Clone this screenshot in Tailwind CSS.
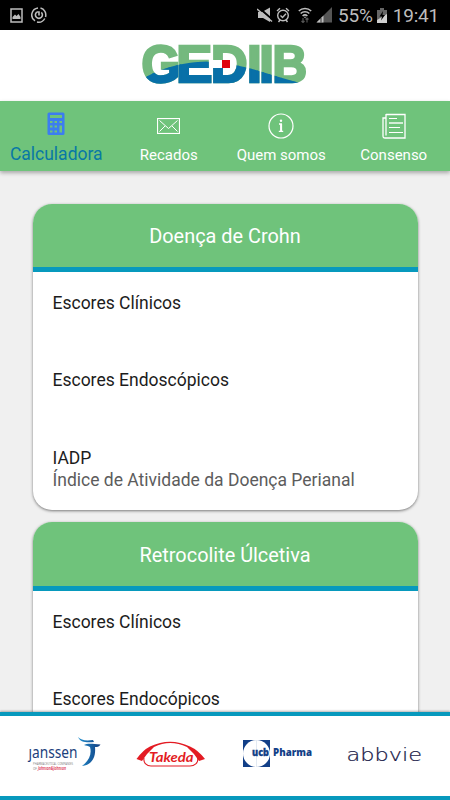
<!DOCTYPE html>
<html lang="pt-BR">
<head>
    <meta charset="UTF-8">
    <title>GEDIIB</title>
    <script src="https://cdn.jsdelivr.net/npm/@tailwindcss/browser@4"></script>
</head>
<body class="bg-[#f0f0f0]">
<div class="relative flex h-[800px] w-[450px] flex-col overflow-hidden bg-[#f0f0f0] font-['Roboto',sans-serif] text-[#1c1c1c]">
    <!-- Status bar -->
    <div class="flex h-[30px] shrink-0 items-center justify-between bg-black pl-2.5 pr-[11px] text-[#bdbdbd]">
        <div class="flex items-center gap-2">
            <svg class="h-[15px] w-[13px]" viewBox="0 0 13 15" fill="none">
                <rect x="1" y="1" width="11" height="13" stroke="currentColor" stroke-width="1.5"/>
                <path d="M2.500 11V9L5 6.500 6.500 8 8.500 6 10.500 9V11Z" fill="currentColor"/>
            </svg>
            <svg class="h-4 w-4" viewBox="0 0 16 16" fill="none" stroke="currentColor" stroke-width="1.500">
                <path d="M7 .9A7.100 7.100 0 0 0 4 13.900M6 15A7.100 7.100 0 0 0 13.800 11.500M14.500 10A7.100 7.100 0 0 0 9.500 1.100"/>
                <path d="M5.500 5.300A3.500 3.500 0 1 0 10.300 5.300M5.500 5H8V8.500" stroke-width="1.600"/>
            </svg>
        </div>
        <div class="flex items-center">
            <svg class="mr-[3px] h-4 w-4" viewBox="0 0 16 16" fill="currentColor">
                <path d="M1 5H5L13 .5V15L6 11H1Z"/>
                <path d="M1 0L16 13" stroke="#000" stroke-width="2"/>
                <path d="M0 2L15 14.500" stroke="currentColor" stroke-width="1.500"/>
            </svg>
            <svg class="mr-2 h-4 w-[14px]" viewBox="0 0 14 16" fill="none" stroke="currentColor" stroke-width="1.400">
                <circle cx="7" cy="8.500" r="5.300"/>
                <path d="M1 4L4 1.200M13 4L10 1.200M2.500 15L4 13M11.500 15L10 13M4.500 8.500L6.500 10.500 10 6.800"/>
            </svg>
            <svg class="mr-1 h-4 w-[14px]" viewBox="0 0 14 16" fill="none" stroke="currentColor" stroke-width="1.600">
                <path d="M.8 4A9 9 0 0 1 13.200 4M2.700 6.500A6.300 6.300 0 0 1 11.300 6.500M4.600 9A3.600 3.600 0 0 1 9.400 9"/>
                <circle cx="7" cy="10.300" r=".8" fill="currentColor" stroke="none"/>
                <path d="M5 11V15.500M3.500 14L5 15.500 6.500 14M9 15.500V11M7.500 12.500L9 11 10.500 12.500" stroke="#555" stroke-width="1.200"/>
            </svg>
            <svg class="mr-[6px] h-4 w-4" viewBox="0 0 16 16">
                <path d="M16 0V15.500H.5Z" fill="#555"/>
                <path d="M7.500 8.500V15.500H.5Z" fill="currentColor"/>
                <path d="M5 11V15.500" stroke="#000" stroke-width=".7"/>
            </svg>
            <span class="mr-1 pt-px text-[19px] leading-[29px] tracking-[-0.2px]">55%</span>
            <svg class="mr-[6px] h-[15px] w-[10px]" viewBox="0 0 10 15">
                <path d="M3 0H7V2H10V7L0 13V2H3Z" fill="#666"/>
                <path d="M0 12L10 6V15H0Z" fill="#d0d0d0"/>
                <path d="M6 3L2.500 8.500H5L4 12.500 8 7H5.500Z" fill="#000"/>
            </svg>
            <span class="pt-px text-[19px] leading-[29px] tracking-[-0.2px]">19:41</span>
        </div>
    </div>

    <!-- Logo -->
    <header class="flex h-[71px] shrink-0 justify-center bg-white">
        <svg class="mt-2.5 -ml-[3px] h-[50px] w-[170px]" viewBox="139 40 170 50" font-family="Liberation Sans, sans-serif" font-weight="700" font-size="52">
            <defs>
                <clipPath id="wave">
                    <path d="M139 81C160 67 190 60 215 62C250 65 275 78 309 85V90H139Z"/>
                </clipPath>
                <g id="word" stroke-width="2.600">
                    <text x="141.500" y="81.500" textLength="38.500" lengthAdjust="spacingAndGlyphs">G</text>
                    <text x="176.200" y="81.500" textLength="36" lengthAdjust="spacingAndGlyphs">E</text>
                    <text x="211" y="81.500" textLength="36.500" lengthAdjust="spacingAndGlyphs">D</text>
                    <text x="246.900" y="81.500" textLength="14.700" lengthAdjust="spacingAndGlyphs">I</text>
                    <text x="259.200" y="81.500" textLength="14.700" lengthAdjust="spacingAndGlyphs">I</text>
                    <text x="272.600" y="81.500" textLength="34.500" lengthAdjust="spacingAndGlyphs">B</text>
                </g>
            </defs>
            <use href="#word" fill="#74b97e" stroke="#74b97e"/>
            <use href="#word" fill="#0870a8" stroke="#0870a8" clip-path="url(#wave)"/>
            <rect x="213" y="60" width="9" height="8" fill="#fff"/>
            <rect x="222" y="60" width="8" height="8" fill="#e00510"/>
        </svg>
    </header>

    <!-- Tabs -->
    <nav class="relative z-10 grid h-[70px] shrink-0 grid-cols-4 bg-[#6fc37b] text-[15px] text-white shadow-[0_2px_4px_rgba(0,0,0,0.3)]">
        <a href="#" class="flex flex-col items-center text-[17.5px] leading-5 text-[#0878a5]">
            <svg class="mt-[11px] mb-2 h-6 w-[18px]" viewBox="0 0 18 24">
                <rect x=".5" y=".5" width="17" height="22.500" rx="1.500" fill="#3c7df0"/>
                <path d="M3 3H15V6H3ZM3 9H5.500V11H3ZM7.500 9H10V11H7.500ZM12.500 9H15V11H12.500ZM3 13.500H5.500V15.500H3ZM7.500 13.500H10V15.500H7.500ZM3 18.500H5.500V20.500H3ZM7.500 18.500H10V20.500H7.500ZM12.500 13.500H15V20.500H12.500Z" fill="#6fc37b"/>
            </svg>
            <span>Calculadora</span>
        </a>
        <a href="#" class="flex flex-col items-center leading-5">
            <svg class="mt-[17px] mb-[11px] h-4 w-[23px]" viewBox="0 0 23 16" fill="none" stroke="currentColor">
                <rect x=".5" y=".5" width="22" height="15" stroke-width="1.200"/>
                <path d="M2.500 2.500L11.500 10.500 20.500 2.500M2.500 13.500L8 8M20.500 13.500L15 8"/>
            </svg>
            <span>Recados</span>
        </a>
        <a href="#" class="flex flex-col items-center leading-5">
            <svg class="mt-3 mb-[6px] h-[26px] w-[26px]" viewBox="0 0 26 26" fill="none" stroke="currentColor" stroke-width="1.200">
                <circle cx="13" cy="13" r="12"/>
                <circle cx="13" cy="7.800" r="1.200" fill="currentColor" stroke="none"/>
                <path d="M11 11H13.300V18M10.800 18.300H15.200" stroke-width="1.300"/>
                <path d="M13.100 11V18" stroke-width="2"/>
            </svg>
            <span>Quem somos</span>
        </a>
        <a href="#" class="flex flex-col items-center leading-5">
            <svg class="mt-3 mb-[6px] h-[26px] w-6" viewBox="0 0 24 26" fill="none" stroke="currentColor">
                <path d="M4 1.500H23V25H3Q1 25 1 23V5H4" stroke-width="1.300"/>
                <path d="M4 1V22.500" stroke-width="1.300"/>
                <path d="M7 5.500H15M7 14.500H18M7 19.500H21"/>
                <path d="M7 10H21" stroke-width="2" opacity=".7"/>
            </svg>
            <span>Consenso</span>
        </a>
    </nav>

    <!-- Score cards -->
    <main class="flex flex-1 flex-col gap-3 overflow-hidden pt-[33px] pr-[32.5px] pl-[32.5px]">
        <section class="h-[306px] shrink-0 overflow-hidden rounded-[19px] bg-white shadow-[0_1px_3px_rgba(0,0,0,0.5)]">
            <h2 class="h-[68px] border-b-5 border-[#0799bd] bg-[#6fc37b] text-center text-[19.9px] leading-[65px] text-white">Doença de Crohn</h2>
            <ul class="px-5 pt-5 text-[17.5px] leading-[22px]">
                <li class="h-[77px]">Escores Clínicos</li>
                <li class="h-[78px]">Escores Endoscópicos</li>
                <li>IADP<p class="text-[#5c5c5c]">Índice de Atividade da Doença Perianal</p></li>
            </ul>
        </section>
        <section class="h-[306px] shrink-0 overflow-hidden rounded-[19px] bg-white shadow-[0_1px_3px_rgba(0,0,0,0.5)]">
            <h2 class="h-[69px] border-b-5 border-[#0799bd] bg-[#6fc37b] text-center text-[19.9px] leading-[67px] text-white">Retrocolite Úlcetiva</h2>
            <ul class="px-5 pt-5 text-[17.5px] leading-[22px]">
                <li class="h-[77px]">Escores Clínicos</li>
                <li>Escores Endocópicos</li>
            </ul>
        </section>
    </main>

    <!-- Sponsors -->
    <footer class="relative z-10 flex h-[88px] shrink-0 items-start border-t-4 border-b-4 border-[#0799bd] bg-white pt-[19px] pl-[26px] shadow-[0_-1px_2px_rgba(0,0,0,0.3)]">
        <svg class="h-9 w-[76px]" viewBox="26 735 76 36" font-family="Noto Sans, sans-serif">
            <defs>
                <linearGradient id="bird" x1="0" x2="1">
                    <stop offset="0" stop-color="#2090d0"/>
                    <stop offset="1" stop-color="#123d80"/>
                </linearGradient>
            </defs>
            <text x="28.500" y="757.500" font-size="16" fill="#1c3f7c" textLength="49" lengthAdjust="spacingAndGlyphs">janssen</text>
            <path d="M27 743H32.500V748H27Z" fill="#fff"/>
            <path d="M78 737C81 740 85 741 93 740L94 742C86 743 80 742 78 737ZM84 745C87 743 92 743.500 100.500 744.500C99 747 97 747 95 747C96 757 92 765 82 766C89 761 92 754 90 747C88 745.500 86 746 84 745Z" fill="url(#bird)"/>
            <text x="33" y="764.500" font-size="3.200" fill="#888" textLength="40" lengthAdjust="spacingAndGlyphs">PHARMACEUTICAL COMPANIES</text>
            <text x="33" y="769.500" font-size="3" fill="#888">OF</text>
            <text x="38" y="769.500" font-size="4.500" font-weight="600" font-style="italic" fill="#dc3050" textLength="28" lengthAdjust="spacingAndGlyphs">Johnson&amp;Johnson</text>
        </svg>
        <svg class="ml-[34px] mt-[5px] h-7 w-[70px]" viewBox="136 739 70 28">
            <path d="M136.500 758Q143 749 150 745.500Q170 736 190 745.500Q198 749 205 758L199 760Q194 752 187 746Q170 738 154 746Q147 752 142 760Z" fill="#e31b23"/>
            <path d="M144 757C143 762 147 765 151 765H190C194 765 199 762 197.500 757" fill="none" stroke="#e31b23" stroke-width="1.100"/>
            <text x="149" y="760.500" font-family="Lato, sans-serif" font-size="14" font-weight="700" font-style="italic" fill="#e31b23" textLength="44.500" lengthAdjust="spacingAndGlyphs">Takeda</text>
        </svg>
        <svg class="mt-1 ml-9 h-8 w-[72px]" viewBox="242 739 72 32" font-family="Open Sans, sans-serif" font-weight="800" fill="#123f87">
            <rect x="243" y="740" width="27" height="27"/>
            <circle cx="256.500" cy="753.500" r="13.500" fill="#fff"/>
            <path d="M256.500 740V767" stroke="#dce4ef" stroke-width=".8"/>
            <text x="252" y="756" font-size="10" stroke="#123f87" stroke-width=".3" textLength="17" lengthAdjust="spacingAndGlyphs">ucb</text>
            <text x="273" y="756" font-size="10" textLength="39" lengthAdjust="spacingAndGlyphs">Pharma</text>
        </svg>
        <svg class="mt-1 ml-[30px] h-7 w-[82px]" viewBox="344 738 82 28">
            <text x="346.500" y="760" font-family="DejaVu Sans, sans-serif" font-size="17" font-weight="200" fill="#171747" stroke="#171747" stroke-width=".2" textLength="75.500" lengthAdjust="spacingAndGlyphs">abbvie</text>
        </svg>
    </footer>
</div>
</body>
</html>
